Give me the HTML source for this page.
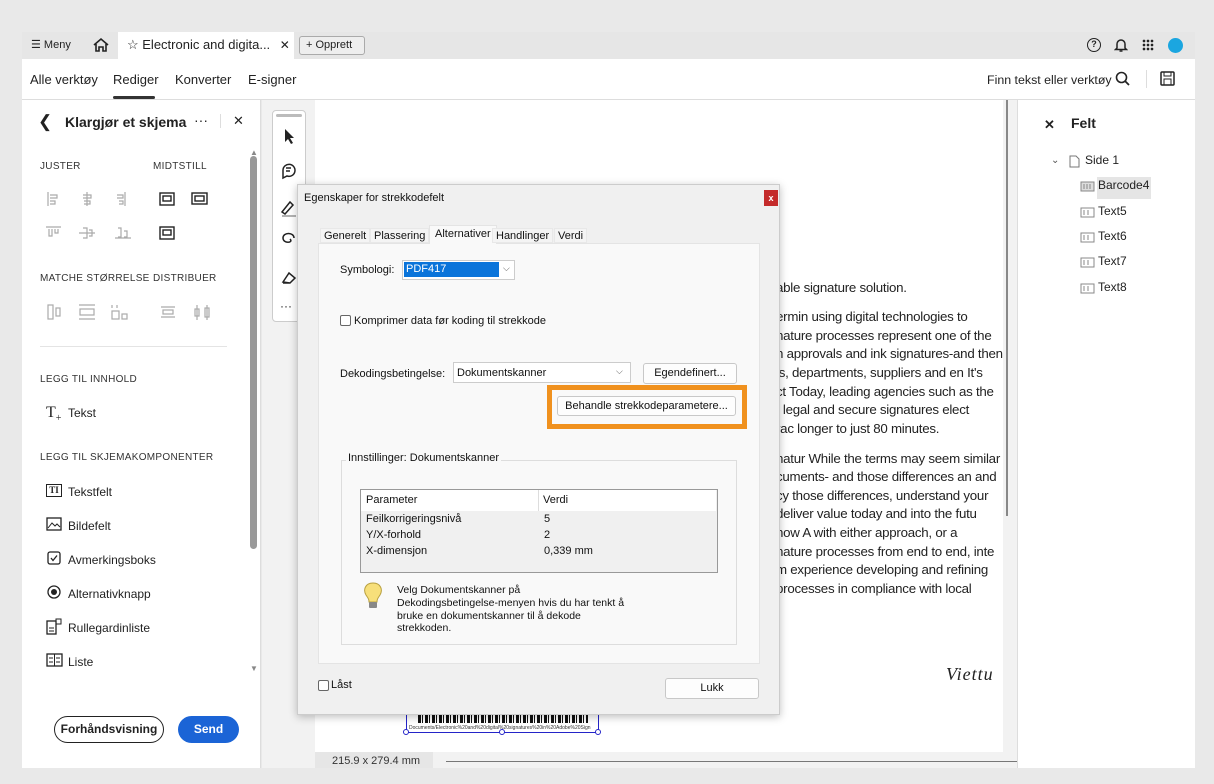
<!DOCTYPE html>
<html><head><meta charset="utf-8"><style>
*{box-sizing:border-box;margin:0;padding:0}
body{width:1214px;height:784px;background:#e9e9e9;font-family:"Liberation Sans",sans-serif;position:relative;overflow:hidden;color:#222}
.a{position:absolute}
.t{white-space:nowrap}
.sec{font-size:10px;color:#333;letter-spacing:.3px}
.ic{stroke:#aaa;fill:none;stroke-width:1.2}
.item{font-size:12px;color:#222}
.doc div{position:absolute;left:0;white-space:nowrap;font-size:13.3px;letter-spacing:-0.25px;color:#222;font-family:"Liberation Sans",sans-serif}
.dlg{font-size:11px;color:#111}
.btn{position:absolute;background:#fdfdfd;border:1px solid #c8c8c8;border-radius:3px;font-size:11px;text-align:center}
</style></head><body>
<!-- tab bar -->
<div class="a" style="left:22px;top:32px;width:1173px;height:27px;background:#e6e6e6"></div>
<div class="a t" style="left:31px;top:38px;font-size:11px">&#9776; Meny</div>
<svg class="a" style="left:92px;top:37px" width="18" height="16"><path d="M2 8 L9 2 L16 8 M4 7 V14 H7 V10 H11 V14 H14 V7" stroke="#222" stroke-width="1.6" fill="none"/></svg>
<div class="a" style="left:118px;top:32px;width:176px;height:27px;background:#fff"></div>
<div class="a t" style="left:127px;top:37px;font-size:13px">☆ Electronic and digita... <span style="font-size:12px;margin-left:6px">✕</span></div>
<div class="a t" style="left:299px;top:36px;width:66px;height:19px;border:1px solid #aaa;border-radius:3px;font-size:11px;padding:2px 6px;background:#eee">+ Opprett</div>
<div class="a" style="left:1087px;top:38px;width:14px;height:14px;border:1.6px solid #222;border-radius:50%;font-size:9px;text-align:center;line-height:11px;font-weight:bold">?</div>
<svg class="a" style="left:1114px;top:37px" width="14" height="16"><path d="M3 11 V7 a4 4 0 0 1 8 0 V11 L12.5 12.5 H1.5 Z" stroke="#222" stroke-width="1.5" fill="none"/><path d="M5.5 14 H8.5" stroke="#222" stroke-width="1.5"/></svg>
<div class="a" style="left:1142px;top:39px;width:12px;height:12px;background:radial-gradient(circle,#222 1.2px,transparent 1.5px) 0 0/4px 4px"></div>
<div class="a" style="left:1168px;top:38px;width:15px;height:15px;border-radius:50%;background:#1ba6e0"></div>
<!-- toolbar -->
<div class="a" style="left:22px;top:59px;width:1173px;height:41px;background:#fff;border-bottom:1px solid #ddd"></div>
<div class="a t" style="left:30px;top:72px;font-size:13px">Alle verktøy</div>
<div class="a t" style="left:113px;top:72px;font-size:13px">Rediger</div>
<div class="a" style="left:113px;top:96px;width:42px;height:3px;background:#333;border-radius:2px"></div>
<div class="a t" style="left:175px;top:72px;font-size:13px">Konverter</div>
<div class="a t" style="left:248px;top:72px;font-size:13px">E-signer</div>
<div class="a t" style="left:987px;top:73px;font-size:12.4px">Finn tekst eller verktøy</div>
<svg class="a" style="left:1115px;top:71px" width="16" height="16"><circle cx="6.5" cy="6.5" r="5" stroke="#222" stroke-width="1.6" fill="none"/><path d="M10 10 L14 14" stroke="#222" stroke-width="1.8"/></svg>
<div class="a" style="left:1146px;top:70px;width:1px;height:18px;background:#ddd"></div>
<svg class="a" style="left:1160px;top:71px" width="15" height="15"><rect x="1" y="1" width="13" height="13" rx="1" stroke="#222" stroke-width="1.5" fill="none"/><rect x="4" y="1" width="7" height="4" stroke="#222" fill="none"/><rect x="4" y="8" width="7" height="6" stroke="#222" fill="none"/></svg>
<!-- left panel -->
<div class="a" style="left:22px;top:100px;width:239px;height:668px;background:#fff;border-right:1px solid #ddd"></div>
<div class="a t" style="left:38px;top:112px;font-size:17px">&#10094;</div>
<div class="a t" style="left:65px;top:114px;font-size:14px;font-weight:bold">Klargjør et skjema</div>
<div class="a t" style="left:194px;top:112px;font-size:14px">···</div>
<div class="a" style="left:220px;top:114px;width:1px;height:14px;background:#ddd"></div>
<div class="a t" style="left:233px;top:113px;font-size:13px">✕</div>
<div class="a sec t" style="left:40px;top:161px">JUSTER</div>
<div class="a sec t" style="left:153px;top:161px">MIDTSTILL</div>
<svg class="a" style="left:45px;top:190px" width="90" height="55"><g class="ic"><path d="M3 2V16M5 5H12V8H5M5 11H10V14H5"/><path d="M42 2V16M38 5H46V8H38M39 11H45V14H39"/><path d="M80 2V16M72 5H78V8H72M74 11H78V14H74"/><path d="M1 37H16M4 39V46H7V39M10 39V43H13V39"/><path d="M34 43H50M38 38H42V48H38M44 40H47V46H44"/><path d="M70 48H86M73 38H76V47H73M79 41H82V47H79"/></g></svg>
<svg class="a" style="left:158px;top:190px" width="52" height="55"><g stroke="#222" fill="none" stroke-width="1.4"><rect x="2" y="3" width="14" height="12"/><rect x="5" y="6" width="8" height="5"/><rect x="34" y="3" width="15" height="11"/><rect x="37" y="6" width="9" height="5"/><rect x="2" y="37" width="14" height="12"/><rect x="5" y="40" width="8" height="5"/></g></svg>
<div class="a sec t" style="left:40px;top:273px">MATCHE STØRRELSE</div>
<div class="a sec t" style="left:153px;top:273px">DISTRIBUER</div>
<svg class="a" style="left:45px;top:302px" width="170" height="22"><g class="ic"><rect x="3" y="3" width="5" height="14"/><rect x="11" y="6" width="4" height="8"/><path d="M34 3H50M34 17H50"/><rect x="35" y="7" width="14" height="6"/><rect x="67" y="9" width="7" height="8"/><rect x="77" y="12" width="5" height="5"/><path d="M67 3V6M72 3V6"/><path d="M116 5H130M116 15H130"/><rect x="118" y="8" width="10" height="4"/><path d="M152 3V18M162 3V18"/><rect x="150" y="7" width="4" height="7"/><rect x="160" y="6" width="4" height="9"/></g></svg>
<div class="a" style="left:40px;top:346px;width:187px;height:1px;background:#e4e4e4"></div>
<div class="a sec t" style="left:40px;top:374px">LEGG TIL INNHOLD</div>
<div class="a t" style="left:46px;top:404px;font-size:16px;font-family:'Liberation Serif',serif">T<sub style="font-size:10px">+</sub></div>
<div class="a item t" style="left:68px;top:406px">Tekst</div>
<div class="a sec t" style="left:40px;top:452px">LEGG TIL SKJEMAKOMPONENTER</div>
<div class="a" style="left:46px;top:484px;width:16px;height:13px;border:1.4px solid #222;font-size:9px;font-weight:bold;text-align:center;line-height:10px;font-family:'Liberation Serif',serif">TI</div>
<div class="a item t" style="left:68px;top:485px">Tekstfelt</div>
<svg class="a" style="left:46px;top:517px" width="16" height="14"><rect x="1" y="1" width="14" height="12" stroke="#222" stroke-width="1.3" fill="none"/><path d="M2 11 L6 6 L9 9 L11 7 L14 10" stroke="#222" fill="none"/></svg>
<div class="a item t" style="left:68px;top:519px">Bildefelt</div>
<svg class="a" style="left:47px;top:551px" width="14" height="14"><rect x="1" y="1" width="12" height="12" rx="2" stroke="#222" stroke-width="1.3" fill="none"/><path d="M4 7 L6 9.5 L10 4.5" stroke="#222" stroke-width="1.3" fill="none"/></svg>
<div class="a item t" style="left:68px;top:553px">Avmerkingsboks</div>
<svg class="a" style="left:47px;top:585px" width="14" height="14"><circle cx="7" cy="7" r="6" stroke="#222" stroke-width="1.3" fill="none"/><circle cx="7" cy="7" r="3" fill="#222"/></svg>
<div class="a item t" style="left:68px;top:587px">Alternativknapp</div>
<svg class="a" style="left:46px;top:618px" width="17" height="17"><rect x="1" y="3" width="9" height="13" stroke="#222" stroke-width="1.3" fill="none"/><rect x="10" y="1" width="5" height="5" stroke="#222" fill="none"/><path d="M3 10H8M3 13H8" stroke="#222"/></svg>
<div class="a item t" style="left:68px;top:621px">Rullegardinliste</div>
<svg class="a" style="left:46px;top:653px" width="17" height="14"><rect x="1" y="1" width="15" height="12" stroke="#222" stroke-width="1.3" fill="none"/><path d="M8.5 1V13M3 5H7M3 9H7M10 5H14M10 9H14" stroke="#222"/></svg>
<div class="a item t" style="left:68px;top:655px">Liste</div>
<div class="a" style="left:250px;top:148px;font-size:8px;color:#888">▲</div>
<div class="a" style="left:250px;top:156px;width:7px;height:393px;background:#999;border-radius:4px"></div>
<div class="a" style="left:250px;top:664px;font-size:8px;color:#888">▼</div>
<div class="a t" style="left:54px;top:716px;width:110px;height:27px;border:1.5px solid #222;border-radius:14px;font-size:12px;font-weight:bold;text-align:center;line-height:24px">Forhåndsvisning</div>
<div class="a t" style="left:178px;top:716px;width:61px;height:27px;background:#1b64d6;border-radius:14px;color:#fff;font-size:12px;font-weight:bold;text-align:center;line-height:27px">Send</div>
<!-- canvas -->
<div class="a" style="left:262px;top:100px;width:755px;height:668px;background:#f2f2f2"></div>
<div class="a" style="left:315px;top:100px;width:688px;height:652px;background:#fff"></div>
<div class="a" style="left:272px;top:110px;width:34px;height:212px;background:#fff;border:1px solid #ccc;border-radius:4px"></div>
<div class="a" style="left:276px;top:114px;width:26px;height:3px;background:#bbb;border-radius:2px"></div>
<svg class="a" style="left:280px;top:126px" width="20" height="190"><path d="M5 3 L5 16 L8 13 L11 18 L13 17 L10 12 L14 12 Z" fill="#222"/><g stroke="#222" stroke-width="1.5" fill="none"><path d="M3 44 a6 6 0 1 1 4 6 L3 52 Z"/><path d="M6 42H11M6 45H10"/><path d="M2 86 L10 76 L13 79 L5 88 Z"/><path d="M2 90H16" stroke="#999"/><path d="M14 112 C14 106 3 106 3 112 C3 118 14 117 10 113"/><path d="M3 156 L9 147 L15 152 L10 157 Z M3 157 H10"/></g><text x="0" y="184" font-size="12" fill="#222">···</text></svg>
<div class="a" style="left:1006px;top:100px;width:2px;height:416px;background:#888"></div>
<div class="a" style="left:1021px;top:414px;width:4px;height:37px;background:#999;border-radius:2px"></div>
<div class="doc a" style="left:776px;top:280px;width:227px;height:330px;overflow:hidden">
<div style="top:0">able signature solution.</div>
<div style="top:29px">ermin using digital technologies to</div>
<div style="top:48px">nature processes represent one of the</div>
<div style="top:66px">n approvals and ink signatures-and then</div>
<div style="top:85px">is, departments, suppliers and en It's</div>
<div style="top:104px">ct Today, leading agencies such as the</div>
<div style="top:122px">, legal and secure signatures elect</div>
<div style="top:141px">rac longer to just 80 minutes.</div>
<div style="top:171px">natur While the terms may seem similar</div>
<div style="top:189px">cuments- and those differences an and</div>
<div style="top:208px">cy those differences, understand your</div>
<div style="top:226px"> deliver value today and into the futu</div>
<div style="top:245px">now A with either approach, or a</div>
<div style="top:264px">nature processes from end to end, inte</div>
<div style="top:282px">m experience developing and refining</div>
<div style="top:301px"> processes in compliance with local</div>
</div>
<div class="a t" style="left:946px;top:664px;font-size:18px;font-family:'Liberation Serif',serif;font-style:italic;letter-spacing:1px">Viettu</div>
<!-- barcode -->
<div class="a" style="left:406px;top:712px;width:193px;height:21px;border:1.5px solid #2424c8;border-top:none"></div>
<div class="a" style="left:418px;top:713px;width:170px;height:10px;background:repeating-linear-gradient(90deg,#111 0 3px,#fff 3px 4px,#111 4px 5px,#fff 5px 7px)"></div>
<div class="a t" style="left:409px;top:725px;font-size:5px;color:#333">Documents/Electronic%20and%20digital%20signatures%20in%20Adobe%20Sign</div>
<div class="a" style="left:403px;top:729px;width:6px;height:6px;border:1.5px solid #2424c8;border-radius:50%;background:#fff"></div>
<div class="a" style="left:499px;top:729px;width:6px;height:6px;border:1.5px solid #2424c8;border-radius:50%;background:#fff"></div>
<div class="a" style="left:595px;top:729px;width:6px;height:6px;border:1.5px solid #2424c8;border-radius:50%;background:#fff"></div>
<div class="a" style="left:315px;top:752px;width:118px;height:16px;background:#e6e6e6"></div>
<div class="a t" style="left:332px;top:755px;font-size:11px;color:#333">215.9 x 279.4 mm</div>
<div class="a" style="left:446px;top:761px;width:571px;height:1px;background:#777"></div>
<!-- right panel -->
<div class="a" style="left:1017px;top:100px;width:178px;height:668px;background:#fff;border-left:1px solid #ddd"></div>
<div class="a t" style="left:1044px;top:117px;font-size:13px;font-weight:bold">✕</div>
<div class="a t" style="left:1071px;top:115px;font-size:14px;font-weight:bold">Felt</div>
<div class="a t" style="left:1051px;top:155px;font-size:10px;color:#555">⌄</div>
<svg class="a" style="left:1069px;top:155px" width="11" height="13"><path d="M1 1H7L10 4V12H1Z" stroke="#777" fill="none"/></svg>
<div class="a t" style="left:1085px;top:153px;font-size:12px">Side 1</div>
<div class="a" style="left:1097px;top:177px;width:54px;height:22px;background:#e5e5e5"></div>
<div class="a t" style="left:1098px;top:178px;font-size:12px">Barcode4</div>
<div class="a t" style="left:1098px;top:204px;font-size:12px">Text5</div>
<div class="a t" style="left:1098px;top:229px;font-size:12px">Text6</div>
<div class="a t" style="left:1098px;top:254px;font-size:12px">Text7</div>
<div class="a t" style="left:1098px;top:280px;font-size:12px">Text8</div>
<svg class="a" style="left:1080px;top:181px" width="15" height="120"><g stroke="#888" fill="none"><rect x="1" y="1" width="13" height="9" fill="#ddd"/><rect x="1" y="27" width="13" height="9"/><rect x="1" y="52" width="13" height="9"/><rect x="1" y="77" width="13" height="9"/><rect x="1" y="103" width="13" height="9"/><path d="M4 29V34M8 29V34M4 54V59M8 54V59M4 79V84M8 79V84M4 105V110M8 105V110M4 3V8M7 3V8M10 3V8"/></g></svg>
<!-- dialog -->
<div class="a dlg" style="left:297px;top:184px;width:483px;height:531px;background:#f0f0f0;border:1px solid #ccc;box-shadow:0 2px 8px rgba(0,0,0,.25)">
 <div class="a t" style="left:6px;top:7px;font-size:11px">Egenskaper for strekkodefelt</div>
 <div class="a" style="left:466px;top:5px;width:14px;height:16px;background:#c42b2b;color:#fff;font-size:9px;text-align:center;line-height:16px;font-weight:bold">x</div>
 <div class="a" style="left:20px;top:58px;width:442px;height:421px;background:#f9f9f9;border:1px solid #e4e4e4"></div>
 <div class="a t" style="left:22px;top:43px;height:15px;padding:1px 3px;background:#f4f4f4;border:1px solid #e8e8e8">Generelt</div>
 <div class="a t" style="left:72px;top:43px;height:15px;padding:1px 3px;background:#f4f4f4;border:1px solid #e8e8e8">Plassering</div>
 <div class="a t" style="left:131px;top:40px;height:19px;padding:2px 5px;background:#f9f9f9;border:1px solid #e4e4e4;border-bottom:none">Alternativer</div>
 <div class="a t" style="left:194px;top:43px;height:15px;padding:1px 3px;background:#f4f4f4;border:1px solid #e8e8e8">Handlinger</div>
 <div class="a t" style="left:256px;top:43px;height:15px;padding:1px 3px;background:#f4f4f4;border:1px solid #e8e8e8">Verdi</div>
 <div class="a t" style="left:42px;top:79px">Symbologi:</div>
 <div class="a" style="left:104px;top:75px;width:113px;height:20px;background:#fff;border:1px solid #ccc"></div>
 <div class="a t" style="left:106px;top:77px;width:95px;height:15px;background:#0a74da;color:#fff;padding:1px 2px">PDF417</div>
 <div class="a t" style="left:205px;top:78px;font-size:9px;color:#555">⌵</div>
 <div class="a" style="left:42px;top:130px;width:11px;height:11px;border:1px solid #666;border-radius:2px;background:#fff"></div>
 <div class="a t" style="left:56px;top:130px">Komprimer data før koding til strekkode</div>
 <div class="a t" style="left:42px;top:183px">Dekodingsbetingelse:</div>
 <div class="a" style="left:155px;top:177px;width:178px;height:21px;background:#fff;border:1px solid #ccc"></div>
 <div class="a t" style="left:159px;top:182px">Dokumentskanner</div>
 <div class="a t" style="left:318px;top:181px;font-size:9px;color:#555">⌵</div>
 <div class="btn" style="left:345px;top:178px;width:94px;height:21px;line-height:19px">Egendefinert...</div>
 <div class="a" style="left:249px;top:200px;width:200px;height:44px;border:5px solid #f0911e"></div>
 <div class="btn" style="left:259px;top:211px;width:179px;height:20px;line-height:18px">Behandle strekkodeparametere...</div>
 <div class="a" style="left:43px;top:275px;width:396px;height:185px;border:1px solid #ddd"></div>
 <div class="a t" style="left:48px;top:267px;background:#f9f9f9;padding:0 2px">Innstillinger: Dokumentskanner</div>
 <div class="a" style="left:62px;top:304px;width:358px;height:84px;background:#f0f0f0;border:1.5px solid #999"></div>
 <div class="a" style="left:63px;top:305px;width:355px;height:21px;background:#fff"></div>
 <div class="a" style="left:240px;top:305px;width:1px;height:21px;background:#ddd"></div>
 <div class="a t" style="left:68px;top:309px">Parameter</div>
 <div class="a t" style="left:245px;top:309px">Verdi</div>
 <div class="a t" style="left:68px;top:328px">Feilkorrigeringsnivå</div><div class="a t" style="left:246px;top:328px">5</div>
 <div class="a t" style="left:68px;top:344px">Y/X-forhold</div><div class="a t" style="left:246px;top:344px">2</div>
 <div class="a t" style="left:68px;top:360px">X-dimensjon</div><div class="a t" style="left:246px;top:360px">0,339 mm</div>
 <svg class="a" style="left:64px;top:396px" width="22" height="30"><path d="M11 2 C3 2 1 9 4 14 C6 17 7 18 7 21 H15 C15 18 16 17 18 14 C21 9 19 2 11 2 Z" fill="#f7df7a" stroke="#b8a040"/><rect x="7" y="21" width="8" height="6" rx="1" fill="#888"/></svg>
 <div class="a" style="left:99px;top:399px;line-height:12.8px;font-size:10.5px">Velg Dokumentskanner på<br>Dekodingsbetingelse-menyen hvis du har tenkt å<br>bruke en dokumentskanner til å dekode<br>strekkoden.</div>
 <div class="a" style="left:20px;top:495px;width:11px;height:11px;border:1px solid #666;border-radius:2px;background:#fff"></div>
 <div class="a t" style="left:33px;top:494px">Låst</div>
 <div class="btn" style="left:367px;top:493px;width:94px;height:21px;line-height:19px">Lukk</div>
</div>
</body></html>
